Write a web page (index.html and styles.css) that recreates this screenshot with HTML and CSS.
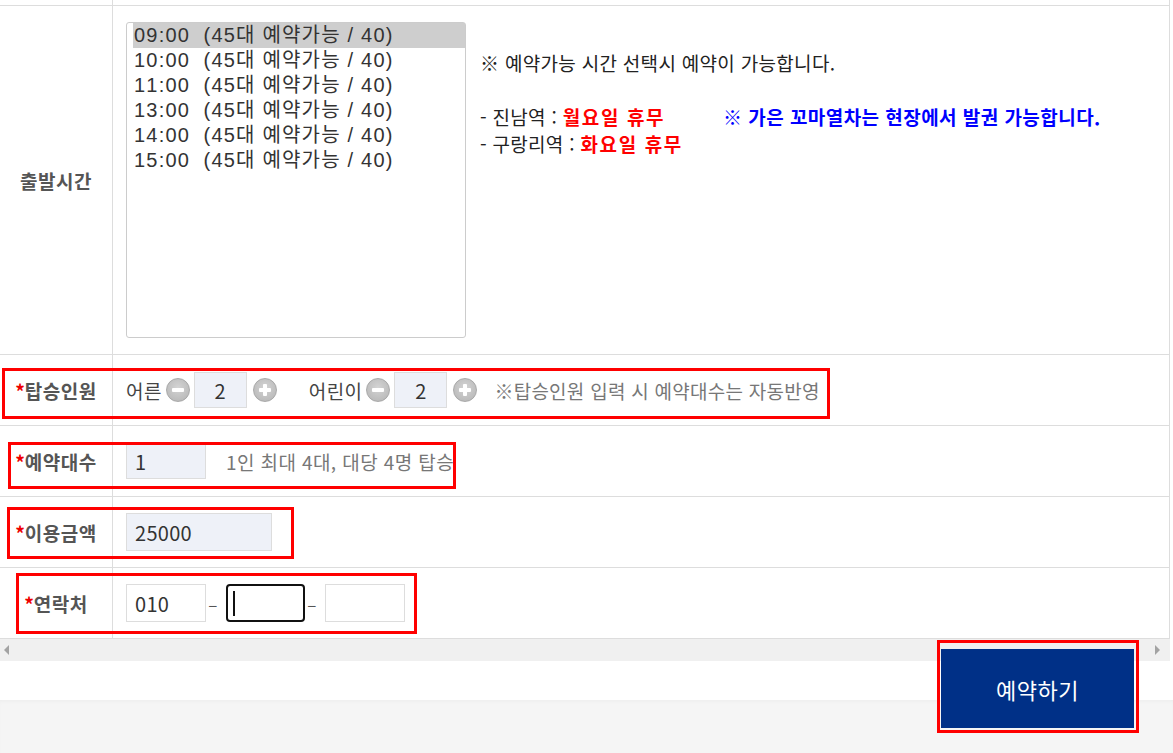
FILE: index.html
```html
<!DOCTYPE html>
<html lang="ko">
<head>
<meta charset="utf-8">
<title>예약</title>
<link rel="stylesheet" href="styles.css">
</head>
<body>
<div class="page">
  <div class="table">
    <div class="row row-prev"><div class="th"></div><div class="td"></div></div>
    <div class="row row-time">
      <div class="th">출발시간</div>
      <div class="td td-time">
        <div class="listbox">
          <div class="opt sel">09:00&nbsp; (45대 예약가능 / 40)</div>
          <div class="opt">10:00&nbsp; (45대 예약가능 / 40)</div>
          <div class="opt">11:00&nbsp; (45대 예약가능 / 40)</div>
          <div class="opt">13:00&nbsp; (45대 예약가능 / 40)</div>
          <div class="opt">14:00&nbsp; (45대 예약가능 / 40)</div>
          <div class="opt">15:00&nbsp; (45대 예약가능 / 40)</div>
        </div>
        <div class="notes">
          <p>※ 예약가능 시간 선택시 예약이 가능합니다.</p>
          <p>&nbsp;</p>
          <p>- 진남역 : <span class="red">월요일 휴무</span><span class="blue">※ 가은 꼬마열차는 현장에서 발권 가능합니다.</span></p>
          <p>- 구랑리역 : <span class="red">화요일 휴무</span></p>
        </div>
      </div>
    </div>
    <div class="row row-field">
      <div class="th"><span class="req">*</span>탑승인원</div>
      <div class="td">
        <span class="lbl">어른</span>
        <span class="ico minus"></span>
        <input class="inp num" value="2" readonly>
        <span class="ico plus"></span>
        <span class="lbl lbl-child">어린이</span>
        <span class="ico minus"></span>
        <input class="inp num" value="2" readonly>
        <span class="ico plus"></span>
        <span class="hint hint-pass">※탑승인원 입력 시 예약대수는 자동반영</span>
      </div>
    </div>
    <div class="row row-field">
      <div class="th"><span class="req">*</span>예약대수</div>
      <div class="td">
        <input class="inp cnt" value="1" readonly>
        <span class="hint hint-cnt">1인 최대 4대, 대당 4명 탑승</span>
      </div>
    </div>
    <div class="row row-field">
      <div class="th"><span class="req">*</span>이용금액</div>
      <div class="td">
        <input class="inp price" value="25000" readonly>
      </div>
    </div>
    <div class="row row-field">
      <div class="th"><span class="req">*</span>연락처</div>
      <div class="td">
        <input class="inp tel" value="010" readonly>
        <span class="dash">–</span>
        <span class="inp tel focus"><span class="caret"></span></span>
        <span class="dash">–</span>
        <input class="inp tel" value="" readonly>
      </div>
    </div>
  </div>
  <div class="hscroll"><span class="arr arr-l"></span><span class="arr arr-r"></span></div>
  <div class="actions"><button class="btn" type="button">예약하기</button></div>

  <div class="mark mark-pass"></div>
  <div class="mark mark-cnt"></div>
  <div class="mark mark-price"></div>
  <div class="mark mark-tel"></div>
  <div class="mark mark-btn"></div>
</div>
<div class="footer"></div>
</body>
</html>
```

FILE: styles.css
```css
html, body {
  margin: 0;
  padding: 0;
}
body {
  font-family: "Noto Sans CJK KR", "Noto Sans", sans-serif;
  background: #fff;
  color: #333;
  overflow: hidden;
}
.page {
  position: relative;
  height: 700px;
  background: #fff;
}
.table {
  width: 1170px;
  border-right: 1px solid #ddd;
  box-sizing: border-box;
}
.row {
  display: grid;
  grid-template-columns: 113px 1fr;
  border-bottom: 1px solid #ddd;
}
.row-prev { height: 5px; }
.row-time { height: 348px; }
.row-field { height: 70px; }
.th {
  border-right: 1px solid #ddd;
  display: flex;
  align-items: center;
  justify-content: center;
  font-weight: bold;
  color: #555;
  font-size: 19px;
  letter-spacing: 0.5px;
}
.req {
  color: #e00;
  font-weight: bold;
  letter-spacing: 0;
}
.td {
  padding-left: 13px;
  display: flex;
  align-items: center;
  font-size: 19px;
  letter-spacing: 0.4px;
}
.td-time {
  align-items: flex-start;
  padding-top: 16px;
}
.listbox {
  width: 340px;
  height: 316px;
  box-sizing: border-box;
  border: 1px solid #ccc;
  border-radius: 3px;
  padding: 0 0 0 6px;
  flex: none;
}
.opt {
  height: 25px;
  line-height: 25px;
  font-family: "Liberation Sans", "Noto Sans CJK KR", sans-serif;
  font-size: 20px;
  letter-spacing: 1.2px;
  font-kerning: none;
  font-variant-numeric: tabular-nums;
  color: #333;
  padding-left: 1px;
  white-space: nowrap;
}
.opt.sel { background: #cecece; }
.notes {
  margin-left: 14px;
  margin-top: 27px;
  font-size: 19px;
  color: #222;
  letter-spacing: 0.3px;
}
.notes p {
  margin: 0;
  line-height: 27px;
  white-space: nowrap;
}
.red { color: #f00; font-weight: bold; letter-spacing: 1.6px; }
.blue { color: #00f; font-weight: bold; margin-left: 58px; letter-spacing: 0.45px; }

.lbl { color: #444; }
.lbl-child { margin-left: 28px; }
.ico {
  width: 24px;
  height: 24px;
  border-radius: 50%;
  box-sizing: border-box;
  border: 1px solid #a9a9a9;
  background: radial-gradient(circle at 50% 40%, #d4d4d4 0%, #bdbdbd 70%, #b0b0b0 100%);
  position: relative;
  flex: none;
  margin: 0 4px;
}
.ico::before {
  content: "";
  position: absolute;
  left: 5px;
  top: 9px;
  width: 12px;
  height: 4px;
  border-radius: 1px;
  background: #fff;
}
.ico.plus { margin-left: 6px; }
.ico.plus::after {
  content: "";
  position: absolute;
  left: 9px;
  top: 5px;
  width: 4px;
  height: 12px;
  border-radius: 1px;
  background: #fff;
}
.inp {
  box-sizing: border-box;
  border: 1px solid #ddd;
  background: #fff;
  font-family: "Noto Sans CJK KR", "Noto Sans", sans-serif;
  font-size: 20px;
  color: #333;
  padding: 0 0 0 8px;
  margin: 0;
  outline: none;
  flex: none;
  letter-spacing: 0.3px;
}
.num {
  width: 53px;
  height: 36px;
  text-align: center;
  padding: 0;
  background: #eef1f8;
}
.cnt {
  width: 80px;
  height: 36px;
  background: #eef1f8;
}
.price {
  width: 146px;
  height: 38px;
  background: #eef1f8;
}
.tel {
  width: 80px;
  height: 38px;
}
.focus {
  display: flex;
  align-items: center;
  border: 2px solid #111;
  border-radius: 4px;
  padding-left: 5px;
  width: 79px;
}
.caret {
  width: 2px;
  height: 25px;
  background: #111;
}
.dash {
  width: 20px;
  text-align: center;
  color: #555;
  font-size: 17px;
  padding-right: 6px;
  box-sizing: border-box;
}
.hint {
  color: #777;
}
.hint-pass { margin-left: 13px; letter-spacing: 0.25px; }
.hint-cnt { margin-left: 20px; }

.hscroll {
  width: 1170px;
  height: 22px;
  background: #f0f0f0;
  display: flex;
  align-items: center;
  justify-content: space-between;
  padding: 0 10px 0 4px;
  box-sizing: border-box;
}
.arr {
  width: 0;
  height: 0;
  border-top: 5px solid transparent;
  border-bottom: 5px solid transparent;
}
.arr-l { border-right: 5px solid #a3a3a3; }
.arr-r { border-left: 5px solid #a3a3a3; }

.actions {
  display: flex;
  justify-content: flex-end;
  padding-right: 39px;
  margin-top: -12px;
}
.btn {
  position: relative;
  z-index: 2;
  width: 193px;
  height: 79px;
  background: #003087;
  color: #fff;
  border: none;
  font-family: "Noto Sans CJK KR", "Noto Sans", sans-serif;
  font-size: 22px;
  letter-spacing: 0.5px;
  padding: 0;
  cursor: pointer;
}
.footer {
  height: 53px;
  background: #f5f5f5;
  box-shadow: inset 0 3px 4px -2px rgba(0, 0, 0, 0.04);
}

.mark {
  position: absolute;
  border: 3px solid #f00;
  box-sizing: border-box;
  pointer-events: none;
  z-index: 3;
}
.mark-pass { left: 2px; top: 368px; width: 828px; height: 51px; }
.mark-cnt { left: 8px; top: 442px; width: 448px; height: 47px; }
.mark-price { left: 7px; top: 507px; width: 287px; height: 52px; }
.mark-tel { left: 16px; top: 573px; width: 401px; height: 61px; }
.mark-btn { left: 937px; top: 640px; width: 202px; height: 93px; }
```
